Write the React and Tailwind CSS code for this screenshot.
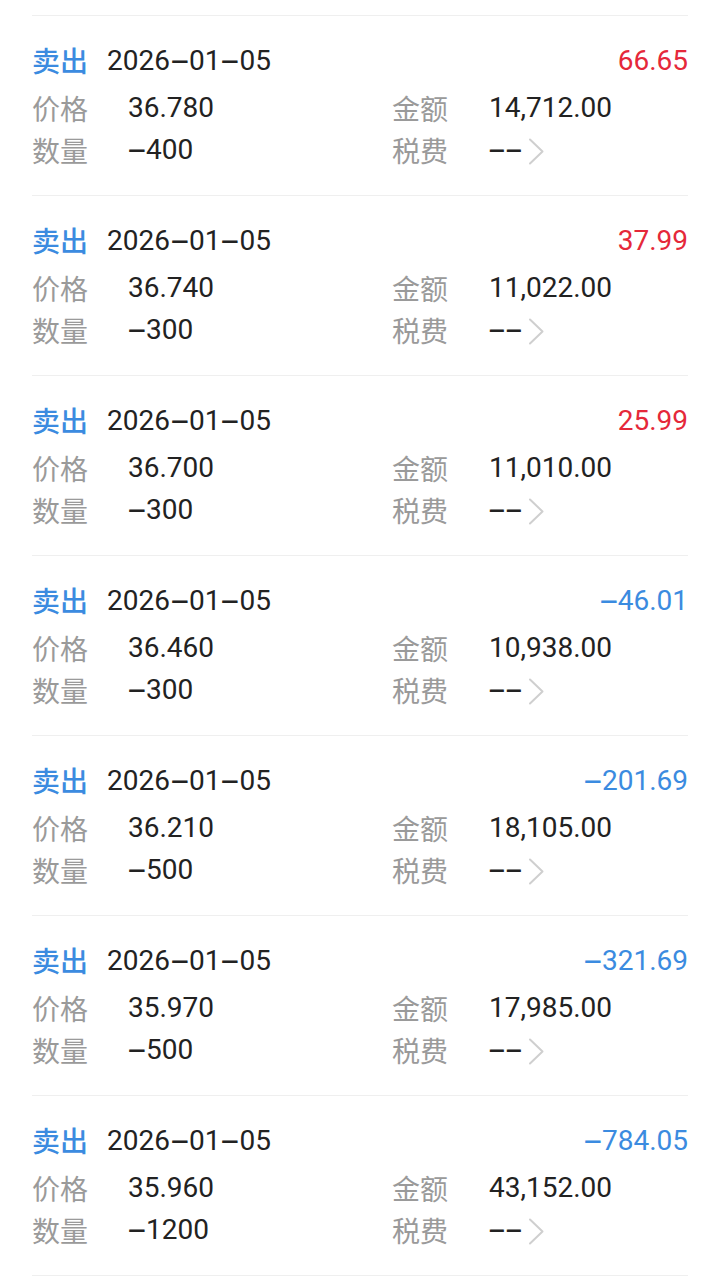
import React from "react";

const rows = [
  { pl: "66.65", price: "36.780", amt: "14,712.00", qty: "-400" },
  { pl: "37.99", price: "36.740", amt: "11,022.00", qty: "-300" },
  { pl: "25.99", price: "36.700", amt: "11,010.00", qty: "-300" },
  { pl: "-46.01", price: "36.460", amt: "10,938.00", qty: "-300" },
  { pl: "-201.69", price: "36.210", amt: "18,105.00", qty: "-500" },
  { pl: "-321.69", price: "35.970", amt: "17,985.00", qty: "-500" },
  { pl: "-784.05", price: "35.960", amt: "43,152.00", qty: "-1200" },
];

function Dash({ w = "w-[19px]", s = "scale-x-[2.3]" }) {
  return (
    <span className={`inline-block ${w} text-center`}>
      <span className={`inline-block ${s} scale-y-[1.2]`}>-</span>
    </span>
  );
}

function Num({ text, w }) {
  const parts = text.split("-");
  const out = [];
  parts.forEach((p, i) => {
    if (i > 0) out.push(<Dash key={"d" + i} w={w} />);
    if (p) out.push(<span key={"p" + i}>{p}</span>);
  });
  return <>{out}</>;
}

function Chevron() {
  return (
    <svg width="17" height="27" viewBox="0 0 17 27" className="ml-[6px] mt-[2px]">
      <polyline
        points="2,1.5 14.5,13.5 2,25.5"
        fill="none"
        stroke="#cfcfcf"
        strokeWidth="2"
        strokeLinecap="round"
        strokeLinejoin="round"
      />
    </svg>
  );
}

function Label({ children, w }) {
  return (
    <span className={`${w} text-[28px] leading-[42px] pt-[5px] text-[#9a9a9a]`}>{children}</span>
  );
}

function Item({ r }) {
  const neg = r.pl.startsWith("-");
  return (
    <div className="border-t border-[#efefef] pt-[27px] pb-[24px]">
      <div className="flex items-center h-[36px] leading-[36px]">
        <span className="text-[28px] font-medium text-[#3b8be0] w-[56px] pt-[3px]">卖出</span>
        <span className="ml-[19px] text-[28px] text-[#222222]">
          <Num text="2026-01-05" />
        </span>
        <span className={`ml-auto text-[28px] ${neg ? "text-[#3b8be0]" : "text-[#e5283a]"}`}>
          <Num text={r.pl} w="w-[18px]" />
        </span>
      </div>
      <div className="mt-[8px] flex items-center h-[42px] leading-[42px]">
        <div className="w-[360px] flex items-center">
          <Label w="w-[96px]">价格</Label>
          <span className="text-[28px] text-[#222222]">{r.price}</span>
        </div>
        <div className="flex items-center">
          <Label w="w-[97px]">金额</Label>
          <span className="text-[28px] text-[#222222]">{r.amt}</span>
        </div>
      </div>
      <div className="flex items-center h-[42px] leading-[42px]">
        <div className="w-[360px] flex items-center">
          <Label w="w-[96px]">数量</Label>
          <span className="text-[28px] text-[#222222]">
            <Num text={r.qty} w="w-[18px]" />
          </span>
        </div>
        <div className="flex items-center">
          <Label w="w-[97px]">税费</Label>
          <span className="text-[28px] text-[#222222] flex items-center">
            <Dash w="w-[16px]" s="scale-x-[2.1]" />
            <Dash w="w-[17px]" s="scale-x-[2.1]" />
          </span>
          <Chevron />
        </div>
      </div>
    </div>
  );
}

export default function App() {
  return (
    <div
      className="bg-white min-h-[1288px] w-[720px] pt-[15px]"
      style={{ fontFamily: "Roboto, 'Noto Sans CJK SC', sans-serif" }}
    >
      <div className="mx-[32px] border-b border-[#efefef]">
        {rows.map((r, i) => (
          <Item key={i} r={r} />
        ))}
      </div>
    </div>
  );
}
